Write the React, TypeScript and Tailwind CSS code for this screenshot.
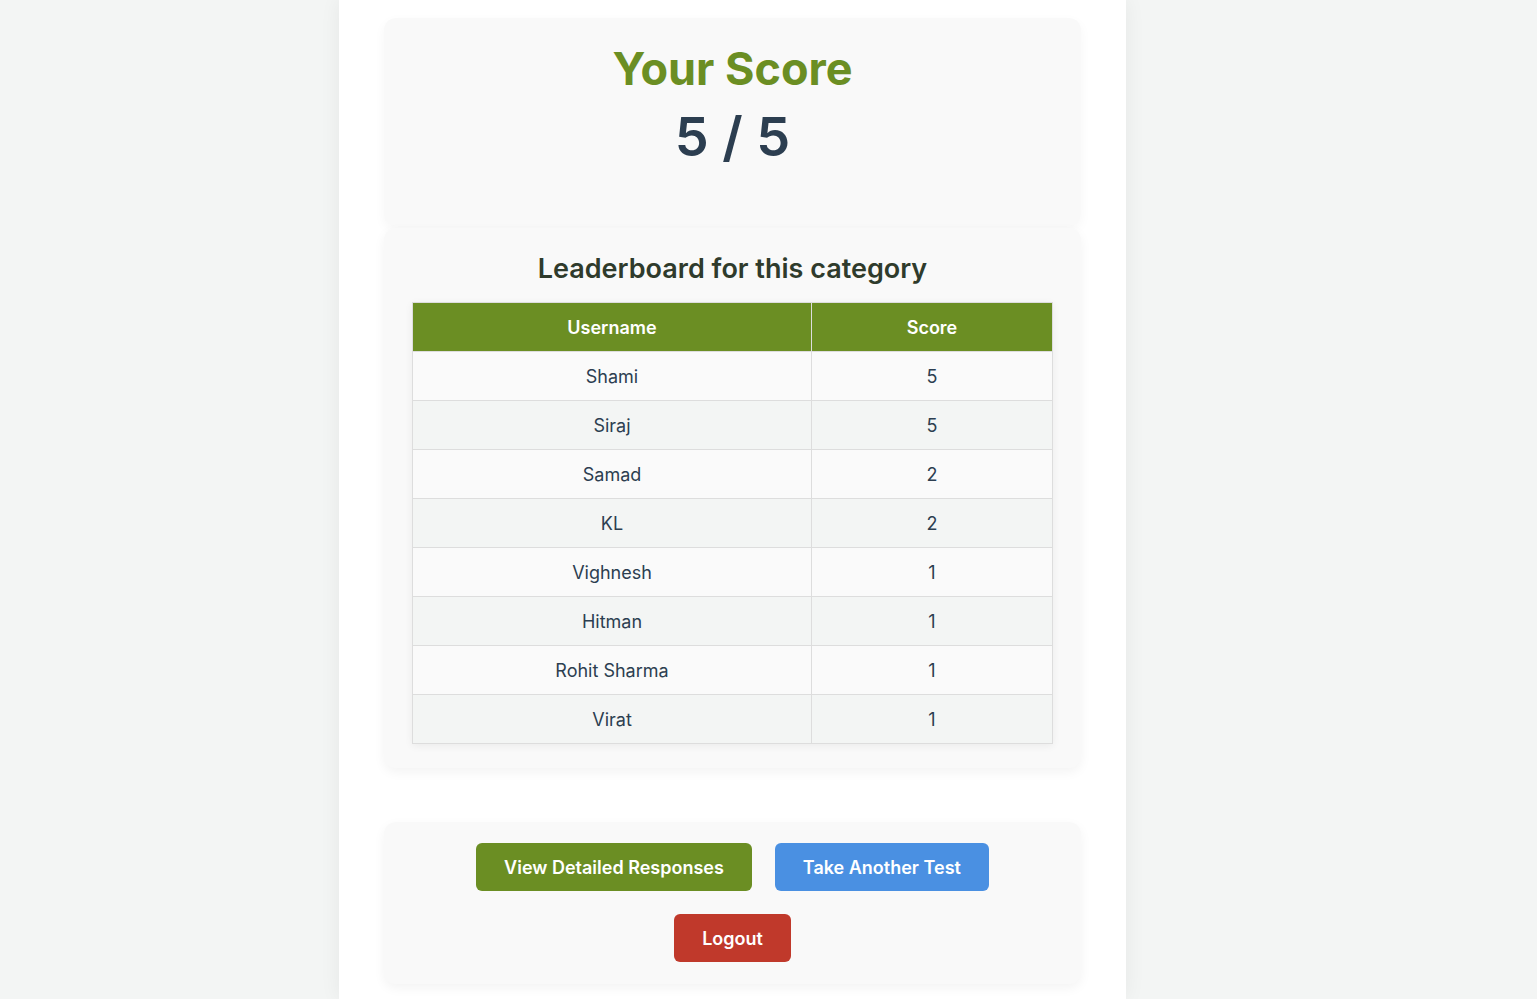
const board = [
  { name: "Shami", score: 5 },
  { name: "Siraj", score: 5 },
  { name: "Samad", score: 2 },
  { name: "KL", score: 2 },
  { name: "Vighnesh", score: 1 },
  { name: "Hitman", score: 1 },
  { name: "Rohit Sharma", score: 1 },
  { name: "Virat", score: 1 },
];

export default function App() {
  return (
    <div className="min-h-screen bg-[#f3f5f4] font-['Inter',sans-serif] overflow-hidden">
      <div className="ml-[339px] w-[787px] h-[999px] bg-white shadow-[0_0_20px_rgba(0,0,0,0.06)] px-[45px] pt-[18px]">
        <div className="rounded-xl bg-[#f9f9f9] shadow-[0_4px_12px_rgba(0,0,0,0.04)] h-[208px] pt-[20px] flex flex-col items-center">
          <h1 className="text-[45px] leading-[62px] font-bold text-[#6b8e23]">Your Score</h1>
          <div className="text-[54px] leading-[72px] font-semibold text-[#2c3e50] mt-[1px]">5 / 5</div>
        </div>

        <div className="mt-[2px] rounded-xl bg-[#f9f9f9] shadow-[0_4px_12px_rgba(0,0,0,0.05)] px-[28px] pt-[22px] pb-[24px]">
          <h2 className="text-center text-[27px] leading-[38px] font-semibold text-[#2f3b2c]">Leaderboard for this category</h2>
          <table className="mt-[14px] w-full border-collapse border border-[#dddddd] shadow-[0_2px_8px_rgba(0,0,0,0.06)] text-[18px]">
            <thead>
              <tr className="bg-[#6b8e23] text-white">
                <th className="w-[399px] h-[49px] border border-[#dddddd] font-semibold">Username</th>
                <th className="h-[49px] border border-[#dddddd] font-semibold">Score</th>
              </tr>
            </thead>
            <tbody className="text-[#2c3e50]">
              {board.map((r, i) => (
                <tr key={i} className={i % 2 === 0 ? "bg-[#fafafa]" : "bg-[#f3f5f4]"}>
                  <td className="h-[49px] border border-[#dddddd] text-center">{r.name}</td>
                  <td className="h-[49px] border border-[#dddddd] text-center">{r.score}</td>
                </tr>
              ))}
            </tbody>
          </table>
        </div>

        <div className="mt-[54px] rounded-xl bg-[#f9f9f9] shadow-[0_4px_12px_rgba(0,0,0,0.05)] pt-[21px] pb-[22px] flex flex-col items-center gap-[23px]">
          <div className="flex gap-[23px]">
            <button className="h-[48px] px-[28px] rounded-md bg-[#6b8e23] text-white text-[18px] font-semibold">View Detailed Responses</button>
            <button className="h-[48px] px-[28px] rounded-md bg-[#4a90e2] text-white text-[18px] font-semibold">Take Another Test</button>
          </div>
          <button className="h-[48px] px-[28px] rounded-md bg-[#c0392b] text-white text-[18px] font-semibold">Logout</button>
        </div>
      </div>
    </div>
  );
}
